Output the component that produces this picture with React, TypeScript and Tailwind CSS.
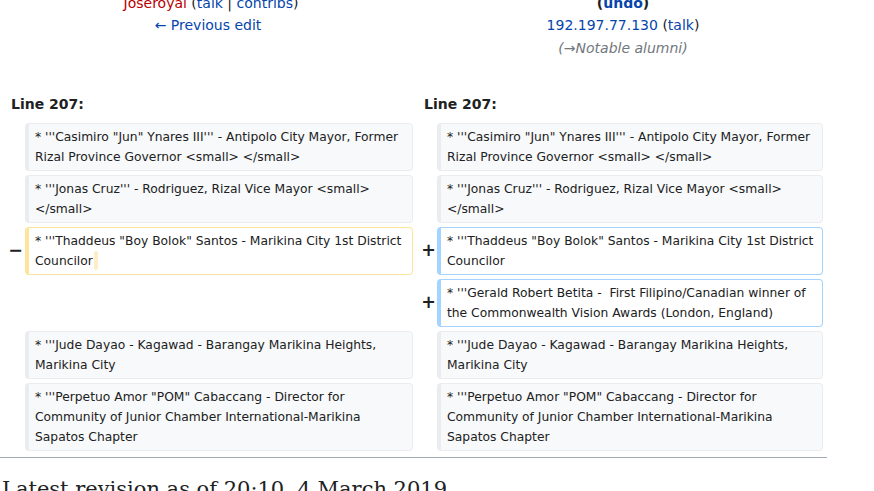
type Row = {
  kind: 'context' | 'deleted' | 'added' | 'empty'
  text?: string
  trail?: boolean
}

const rows: [Row, Row][] = [
  [
    { kind: 'context', text: `* '''Casimiro "Jun" Ynares III''' - Antipolo City Mayor, Former Rizal Province Governor <small> </small>` },
    { kind: 'context', text: `* '''Casimiro "Jun" Ynares III''' - Antipolo City Mayor, Former Rizal Province Governor <small> </small>` },
  ],
  [
    { kind: 'context', text: `* '''Jonas Cruz''' - Rodriguez, Rizal Vice Mayor <small> </small>` },
    { kind: 'context', text: `* '''Jonas Cruz''' - Rodriguez, Rizal Vice Mayor <small> </small>` },
  ],
  [
    { kind: 'deleted', text: `* '''Thaddeus "Boy Bolok" Santos - Marikina City 1st District Councilor`, trail: true },
    { kind: 'added', text: `* '''Thaddeus "Boy Bolok" Santos - Marikina City 1st District Councilor` },
  ],
  [
    { kind: 'empty' },
    { kind: 'added', text: `* '''Gerald Robert Betita -  First Filipino/Canadian winner of the Commonwealth Vision Awards (London, England)` },
  ],
  [
    { kind: 'context', text: `* '''Jude Dayao - Kagawad - Barangay Marikina Heights, Marikina City` },
    { kind: 'context', text: `* '''Jude Dayao - Kagawad - Barangay Marikina Heights, Marikina City` },
  ],
  [
    { kind: 'context', text: `* '''Perpetuo Amor "POM" Cabaccang - Director for Community of Junior Chamber International-Marikina Sapatos Chapter` },
    { kind: 'context', text: `* '''Perpetuo Amor "POM" Cabaccang - Director for Community of Junior Chamber International-Marikina Sapatos Chapter` },
  ],
]

const boxStyle = {
  context: 'bg-[#f8f9fa] border-[#eaecf0]',
  deleted: 'bg-white border-[#ffe49c]',
  added: 'bg-white border-[#a3d3ff]',
}

const Marker = ({ kind, right }: { kind: Row['kind']; right?: boolean }) => {
  let sign = ''
  if (kind === 'deleted') sign = '−'
  if (kind === 'added') sign = '+'
  return (
    <div className="flex items-center justify-end">
      <span
        className={
          'text-[17.5px] font-bold leading-none ' + (right ? '-mr-[3px]' : '-mr-[2px]')
        }
      >
        {sign}
      </span>
    </div>
  )
}

const Cell = ({ row }: { row: Row }) => {
  if (row.kind === 'empty') return <div />
  return (
    <div
      className={
        'rounded-[4px] border border-l-4 px-[6px] py-[3px] text-[12.3px] leading-[20px] whitespace-pre-wrap ' +
        boxStyle[row.kind]
      }
    >
      {row.text}
      {row.trail && (
        <span className="ml-[1px] inline-block h-[19px] w-[4px] rounded-[2px] bg-[#feeec8] align-top" />
      )}
    </div>
  )
}

export default function App() {
  return (
    <div
      className="h-[491px] w-[874px] overflow-hidden bg-white text-[#202122]"
      style={{ fontFamily: '"DejaVu Sans", sans-serif' }}
    >
      <div className="-mt-[8px] w-[827px]">
        <div className="grid grid-cols-[413px_414px] text-[14px] leading-[22.4px]">
          <div className="flex flex-col items-center pl-[3px]">
            <div className="pl-[6px]">
              <span className="text-[#ba0000]">Joseroyal</span> (<span className="text-[#0645ad]">talk</span> |{' '}
              <span className="text-[#0645ad]">contribs</span>)
            </div>
            <div className="text-[#0645ad]">← Previous edit</div>
          </div>
          <div className="flex flex-col items-center pl-[6px]">
            <div className="font-bold">
              (<span className="text-[#0645ad]">undo</span>)
            </div>
            <div>
              <span className="text-[#0645ad]">192.197.77.130</span> (<span className="text-[#0645ad]">talk</span>)
            </div>
            <div className="italic text-[#72777d]">(→Notable alumni)</div>
          </div>
        </div>

        <div className="mt-[34px] grid grid-cols-[413px_414px] text-[14px] font-bold leading-[22.4px]">
          <div className="pl-[11px]">Line 207:</div>
          <div className="pl-[11px]">Line 207:</div>
        </div>

        <div className="mt-[7px] grid grid-cols-[21px_388px_16px_386px] gap-x-[4px] gap-y-[4px]">
          {rows.map(([l, r], i) => (
            <div key={i} className="contents">
              <Marker kind={l.kind} />
              <Cell row={l} />
              <Marker kind={r.kind} right />
              <Cell row={r} />
            </div>
          ))}
        </div>

        <div className="mt-[6px] h-px w-[827px] bg-[#a2a9b1]" />

        <h2
          className="mt-[21px] pl-[2px] text-[21px] leading-[21px]"
          style={{ fontFamily: '"DejaVu Serif", serif' }}
        >
          Latest revision as of 20:10, 4 March 2019
        </h2>
      </div>
    </div>
  )
}
